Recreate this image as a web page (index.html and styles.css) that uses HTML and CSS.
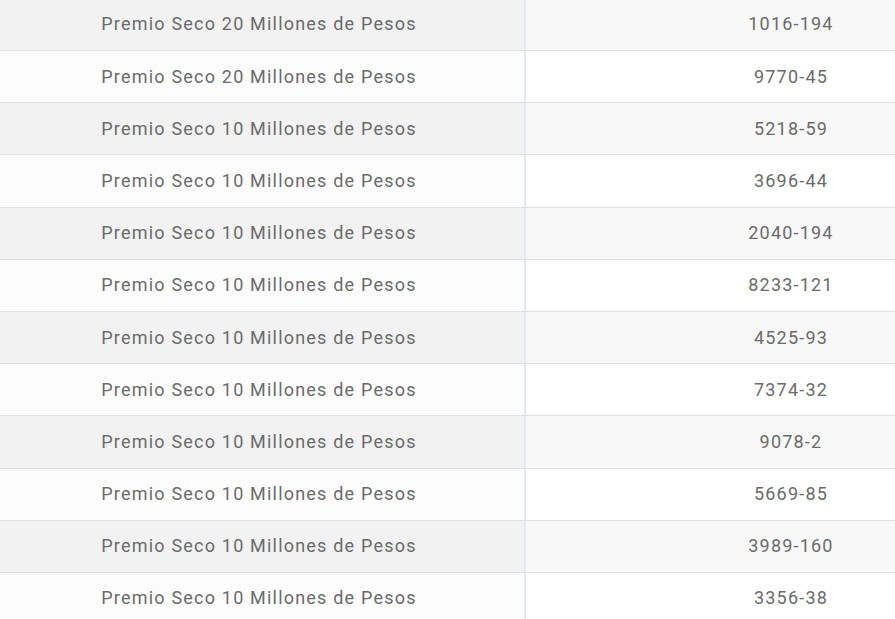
FILE: index.html
```html
<!DOCTYPE html>
<html lang="es">
<head>
<meta charset="utf-8">
<link rel="stylesheet" href="styles.css">
</head>
<body>
<div class="table">
  <div class="row"><div class="cell">Premio Seco 20 Millones de Pesos</div><div class="cell num">1016-194</div></div>
  <div class="row"><div class="cell">Premio Seco 20 Millones de Pesos</div><div class="cell num">9770-45</div></div>
  <div class="row"><div class="cell">Premio Seco 10 Millones de Pesos</div><div class="cell num">5218-59</div></div>
  <div class="row"><div class="cell">Premio Seco 10 Millones de Pesos</div><div class="cell num">3696-44</div></div>
  <div class="row"><div class="cell">Premio Seco 10 Millones de Pesos</div><div class="cell num">2040-194</div></div>
  <div class="row"><div class="cell">Premio Seco 10 Millones de Pesos</div><div class="cell num">8233-121</div></div>
  <div class="row"><div class="cell">Premio Seco 10 Millones de Pesos</div><div class="cell num">4525-93</div></div>
  <div class="row"><div class="cell">Premio Seco 10 Millones de Pesos</div><div class="cell num">7374-32</div></div>
  <div class="row"><div class="cell">Premio Seco 10 Millones de Pesos</div><div class="cell num">9078-2</div></div>
  <div class="row"><div class="cell">Premio Seco 10 Millones de Pesos</div><div class="cell num">5669-85</div></div>
  <div class="row"><div class="cell">Premio Seco 10 Millones de Pesos</div><div class="cell num">3989-160</div></div>
  <div class="row"><div class="cell">Premio Seco 10 Millones de Pesos</div><div class="cell num">3356-38</div></div>
</div>
</body>
</html>
```
FILE: styles.css
```css
html, body {
  margin: 0;
  padding: 0;
  background: #ffffff;
  overflow: hidden;
}
.table {
  width: 895px;
  margin-top: -1.2px;
  font-family: Roboto, "Liberation Sans", sans-serif;
  font-size: 18px;
  letter-spacing: 1.2px;
  color: #6b6b6b;
}
.row {
  display: flex;
  height: 52.2px;
  box-sizing: border-box;
  border-bottom: 1px solid #e0e0e0;
}
.cell {
  width: 526px;
  flex: none;
  display: flex;
  align-items: center;
  justify-content: center;
  border-right: 2px solid #e6e9ec;
  background: #fcfcfc;
  padding-bottom: 1px;
  padding-right: 6px;
  box-sizing: border-box;
}
.cell.num {
  flex: 1;
  width: auto;
  padding-left: 161px;
  padding-right: 0;
  border-right: none;
  background: #ffffff;
}
.row:nth-child(odd) .cell {
  background: #f2f2f2;
}
.row:nth-child(odd) .cell.num {
  background: #f8f8f8;
}
```
